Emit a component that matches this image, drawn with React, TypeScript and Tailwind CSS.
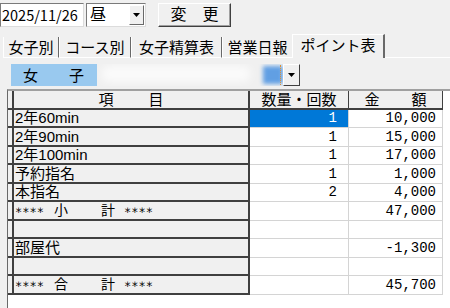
import React from "react";

const rows = [
  { id: 1, label: "2年60min", qty: "1", amt: "10,000", sel: true },
  { id: 2, label: "2年90min", qty: "1", amt: "15,000" },
  { id: 3, label: "2年100min", qty: "1", amt: "17,000" },
  { id: 4, label: "予約指名", qty: "1", amt: "1,000" },
  { id: 5, label: "本指名", qty: "2", amt: "4,000" },
  { id: 6, label: "sub", qty: "", amt: "47,000" },
  { id: 7, label: "", qty: "", amt: "" },
  { id: 8, label: "部屋代", qty: "", amt: "-1,300" },
  { id: 9, label: "", qty: "", amt: "" },
  { id: 10, label: "total", qty: "", amt: "45,700" },
];

const tabs = [
  { name: "女子別", w: "w-[56px]" },
  { name: "コース別", w: "w-[72px]" },
  { name: "女子精算表", w: "w-[91px]" },
  { name: "営業日報", w: "w-[71px]" },
];

const Arrow = () => (
  <svg width="7" height="4" viewBox="0 0 7 4">
    <path d="M0 0h7L3.5 4z" fill="#000" />
  </svg>
);

// "**** 小　計 ****" style row label
const SumLabel = ({ mid }: { mid: string }) => (
  <div className="flex items-center text-[14px] leading-none pl-[1px]">
    <span className="w-[39px] font-['DejaVu_Sans_Mono',monospace] text-[12px]">∗∗∗∗</span>
    <span className="w-[47px]">{mid}</span>
    <span className="w-[23px]">計</span>
    <span className="font-['DejaVu_Sans_Mono',monospace] text-[12px]">∗∗∗∗</span>
  </div>
);

export default function App() {
  return (
    <div className="w-[450px] h-[308px] overflow-hidden bg-[#f0f0f0] text-black font-['Liberation_Sans','Noto_Sans_CJK_JP',sans-serif]">
      {/* top controls */}
      <div className="flex items-start pt-[3px] h-[33px]">
        <div className="w-[84px] h-[24px] bg-white border border-t-[#7a7a7a] border-l-[#7a7a7a] border-r-[#dcdcdc] border-b-[#dcdcdc] flex items-center pl-[1px] text-[14.5px] leading-none font-['Noto_Sans_CJK_JP',sans-serif]">
          2025/11/26
        </div>
        <div className="ml-[2px] w-[60px] h-[24px] bg-white border border-t-[#7a7a7a] border-l-[#7a7a7a] border-r-[#dcdcdc] border-b-[#dcdcdc] flex items-center">
          <span className="flex-1 pl-[3px] text-[16px] leading-none">昼</span>
          <div className="w-[15px] h-[20px] mr-[1px] bg-[#f0f0f0] border border-t-white border-l-white border-r-[#696969] border-b-[#696969] flex items-center justify-center">
            <Arrow />
          </div>
        </div>
        <button className="ml-[12px] w-[73px] h-[24px] bg-[#f0f0f0] border border-t-white border-l-white border-r-[#404040] border-b-[#404040] shadow-[inset_-1px_-1px_0_#a0a0a0] flex items-center justify-center text-[16px] leading-none">
          変　更
        </button>
      </div>

      {/* tabs */}
      <div className="flex items-end h-[25px] pl-[3px]">
        {tabs.map((t) => (
          <div
            key={t.name}
            className={`${t.w} h-[21px] border-l border-l-white border-r border-r-[#696969] border-b border-b-white flex items-center justify-center text-[15px] leading-none`}
          >
            {t.name}
          </div>
        ))}
        <div className="w-[93px] h-[24px] -ml-[1px] border-t border-t-white border-l border-l-white border-r-2 border-r-[#696969] flex items-start justify-center pt-[3px] text-[15px] leading-none">
          ポイント表
        </div>
        <div className="flex-1 h-px bg-white" />
      </div>

      {/* girl selector */}
      <div className="flex items-start pt-[6px] h-[31px]">
        <div className="ml-[11px] w-[86px] h-[22px] bg-[#99c9ef] flex items-center text-[15px] leading-none">
          <span className="ml-[12px]">女</span>
          <span className="ml-[31px]">子</span>
        </div>
        <div className="w-[186px] h-[22px] relative overflow-hidden">
          <div className="absolute left-[4px] top-[2px] w-[150px] h-[16px] bg-white/70 blur-[4px] rounded-full" />
          <div className="absolute left-[166px] top-[2px] w-[20px] h-[18px] bg-[#3d8be0]/80 blur-[2px]" />
          <div className="absolute left-[180px] top-[1px] w-[4px] h-[20px] border-r border-dotted border-[#e0902f]" />
        </div>
        <div className="w-[17px] h-[22px] bg-[#f0f0f0] border border-t-white border-l-white border-r-[#404040] border-b-[#404040] flex items-center justify-center">
          <Arrow />
        </div>
      </div>

      {/* grid */}
      <div className="ml-[7px] h-[219px] bg-white border-l border-l-[#696969] border-t-2 border-t-[#a0a0a0] text-[15px] leading-none">
        {/* header */}
        <div className="flex h-[18.5px]">
          <div className="w-[6px] bg-[#f0f0f0] border-r-2 border-b-2 border-[#404040]" />
          <div className="w-[236px] bg-[#f0f0f0] border-r-2 border-b-2 border-[#404040] flex items-center justify-center gap-[35px]">
            <span>項</span>
            <span>目</span>
          </div>
          <div className="w-[99px] bg-[#f0f0f0] border-r border-b-2 border-[#404040] flex items-center justify-center">
            数量・回数
          </div>
          <div className="w-[94px] bg-[#f0f0f0] border-r border-b-2 border-[#404040] flex items-center justify-center gap-[32px]">
            <span>金</span>
            <span>額</span>
          </div>
        </div>
        {rows.map((r) => (
          <div key={r.id} className="flex h-[18.5px]">
            <div className="w-[6px] bg-[#f0f0f0] border-r-2 border-b-2 border-[#404040]" />
            <div className="w-[236px] bg-[#f0f0f0] border-r-2 border-b-2 border-[#404040] flex items-center">
              {r.label === "sub" ? (
                <SumLabel mid="小" />
              ) : r.label === "total" ? (
                <SumLabel mid="合" />
              ) : (
                <span className="pl-[1px]">{r.label}</span>
              )}
            </div>
            <div
              className={`w-[99px] border-r border-b border-[#d4d4d4] flex items-center justify-end pr-[11px] font-['Liberation_Mono',monospace] text-[14px] ${
                r.sel ? "bg-[#0078d7] text-white" : "bg-white"
              }`}
            >
              {r.qty}
            </div>
            <div className="w-[94px] bg-white border-r border-b border-[#d4d4d4] flex items-center justify-end pr-[6px] font-['Liberation_Mono',monospace] text-[14px]">
              {r.amt}
            </div>
          </div>
        ))}
      </div>
    </div>
  );
}
